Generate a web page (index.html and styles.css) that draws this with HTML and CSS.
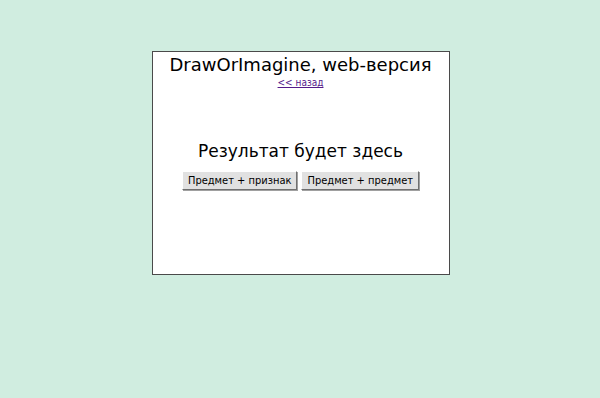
FILE: index.html
```html
<!DOCTYPE html>
<html lang="ru">
    <head>
        <meta charset="UTF-8" />
        <meta name="viewport" content="width=device-width, initial-scale=1.0" />
        <title>DrawOrImagine, web-версия</title>
        <link rel="stylesheet" href="styles.css">
    </head>
    <body>
        <div class="panel">
            <h1 class="title">DrawOrImagine, web-версия</h1>
            <a class="back" href="#">&lt;&lt; назад</a>

            <div class="result">Результат будет здесь</div>

            <div class="buttons">
                <button class="btn">Предмет + признак</button>
                <button class="btn">Предмет + предмет</button>
            </div>
        </div>
    </body>
</html>
```

FILE: styles.css
```css
* {
    margin: 0;
    padding: 0;
}

body {
    background-color: #d0ede0;
    font-family: Tahoma, "DejaVu Sans", sans-serif;
    padding-left: 1px;
}

.panel {
    width: 296px;
    height: 222px;
    margin: 51px auto 0;
    background-color: #fff;
    border: 1px solid #4a4a4a;
    text-align: center;
}

.title {
    font-size: 18px;
    font-weight: normal;
    line-height: 26px;
    color: #000;
}

.back {
    display: block;
    font-family: "DejaVu Sans Condensed", "DejaVu Sans", sans-serif;
    font-size: 10px;
    line-height: 10px;
    color: #551a8b;
}

.result {
    margin-top: 51px;
    font-size: 17px;
    line-height: 24px;
    color: #000;
}

.buttons {
    margin-top: 8px;
    display: flex;
    justify-content: center;
    gap: 4px;
}

.btn {
    font-family: "DejaVu Sans Condensed", "DejaVu Sans", sans-serif;
    font-size: 11px;
    height: 19px;
    padding: 0 5px;
    background-color: #e1e1e1;
    color: #000;
    border: 1px solid;
    border-color: #fff #707070 #707070 #fff;
    box-shadow: 1px 1px 0 #a0a0a0;
}
```
